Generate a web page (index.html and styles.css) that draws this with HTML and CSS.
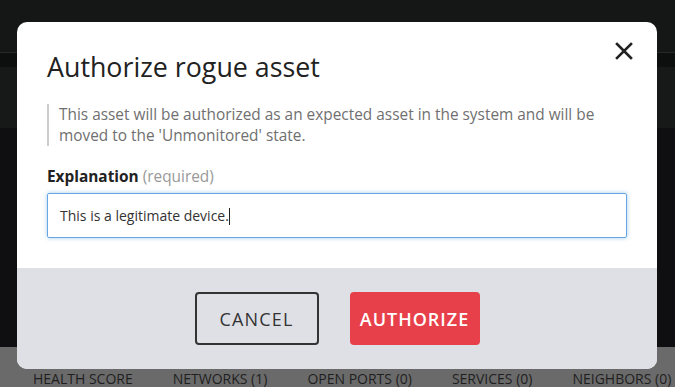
FILE: index.html
```html
<!DOCTYPE html>
<html lang="en">
<head>
    <meta charset="UTF-8">
    <meta name="viewport" content="width=device-width, initial-scale=1.0">
    <title>Authorize rogue asset</title>
    <link rel="stylesheet" href="styles.css">
</head>
<body>
    <div class="page">
        <div class="topbar"></div>
        <div class="subbar"></div>
        <div class="toolbar"></div>
        <div class="content"></div>
        <div class="tabs">
            <span class="tab">HEALTH SCORE</span>
            <span class="tab">NETWORKS (1)</span>
            <span class="tab">OPEN PORTS (0)</span>
            <span class="tab">SERVICES (0)</span>
            <span class="tab">NEIGHBORS (0)</span>
        </div>
    </div>

    <div class="modal">
        <div class="modal-body">
            <button class="close" aria-label="Close">
                <svg width="18" height="18" viewBox="0 0 18 18">
                    <path d="M2 2 L16 16 M16 2 L2 16" stroke="#222" stroke-width="2.6" stroke-linecap="square" fill="none"/>
                </svg>
            </button>
            <h2 class="modal-title">Authorize rogue asset</h2>
            <blockquote class="note">
                This asset will be authorized as an expected asset in the system and will be moved to the 'Unmonitored' state.
            </blockquote>
            <label class="field-label">Explanation <span class="hint">(required)</span></label>
            <div class="field">This is a legitimate device.<span class="caret"></span></div>
        </div>
        <div class="modal-footer">
            <button class="btn btn-cancel">CANCEL</button>
            <button class="btn btn-danger">AUTHORIZE</button>
        </div>
    </div>
</body>
</html>
```

FILE: styles.css
```css
body {
    margin: 0;
    font-family: "Open Sans", "Liberation Sans", sans-serif;
    background-color: #0f0f11;
    overflow: hidden;
}

.page {
    display: flex;
    flex-direction: column;
    height: 387px;
}

.topbar {
    height: 52px;
    background-color: #151616;
    border-bottom: 1px solid #272828;
}

.subbar {
    height: 14px;
    background-color: #0d0e0e;
}

.toolbar {
    height: 61px;
    background-color: #171818;
}

.content {
    flex: 1;
    background-color: #0f0f11;
}

.tabs {
    height: 40px;
    background-color: #6a6a6a;
    display: flex;
    gap: 40px;
    padding: 24px 0 0 33px;
    box-sizing: border-box;
}

.tab {
    font-size: 14px;
    color: #1f1f1f;
    line-height: 15px;
    white-space: nowrap;
}

/* dialog over the page */
.modal {
    position: absolute;
    left: 17px;
    top: 22px;
    width: 640px;
    background-color: white;
    border-radius: 10px;
    overflow: hidden;
}

.modal-body {
    position: relative;
    padding: 27px 30px 30px 30px;
}

.close {
    position: absolute;
    top: 20px;
    right: 24px;
    width: 18px;
    height: 18px;
    padding: 0;
    border: none;
    background: none;
}

.close svg {
    display: block;
}

.modal-title {
    margin: 0 0 19px 0;
    font-size: 26.8px;
    font-weight: 400;
    line-height: 36px;
    color: #222;
}

.note {
    margin: 0 0 21px 0;
    padding: 0 0 0 10px;
    border-left: 2px solid #cccccc;
    font-size: 15.4px;
    line-height: 21px;
    color: #707070;
}

.field-label {
    display: block;
    margin-bottom: 6px;
    font-size: 15.4px;
    font-weight: 700;
    line-height: 20px;
    color: #222;
}

.hint {
    font-weight: 400;
    color: #999;
}

.field {
    height: 45px;
    box-sizing: border-box;
    border: 1px solid #66a7e3;
    border-radius: 2px;
    box-shadow: 0 0 4px rgba(102, 167, 227, 0.6);
    padding: 0 12px;
    font-size: 14px;
    line-height: 43px;
    color: #333;
}

.caret {
    display: inline-block;
    width: 1px;
    height: 17px;
    background-color: #222;
    vertical-align: -4px;
}

.modal-footer {
    background-color: #dfe0e5;
    display: flex;
    justify-content: center;
    gap: 31px;
    padding: 24px 0;
}

.btn {
    height: 53px;
    font-family: "Open Sans", "Liberation Sans", sans-serif;
    font-size: 18px;
    letter-spacing: 1.2px;
    border-radius: 4px;
    cursor: pointer;
}

.btn-cancel {
    width: 124px;
    border: 2px solid #333;
    background-color: transparent;
    color: #333;
}

.btn-danger {
    width: 130px;
    border: none;
    background-color: #e8404a;
    color: white;
    font-weight: 600;
    letter-spacing: 1px;
}
```
